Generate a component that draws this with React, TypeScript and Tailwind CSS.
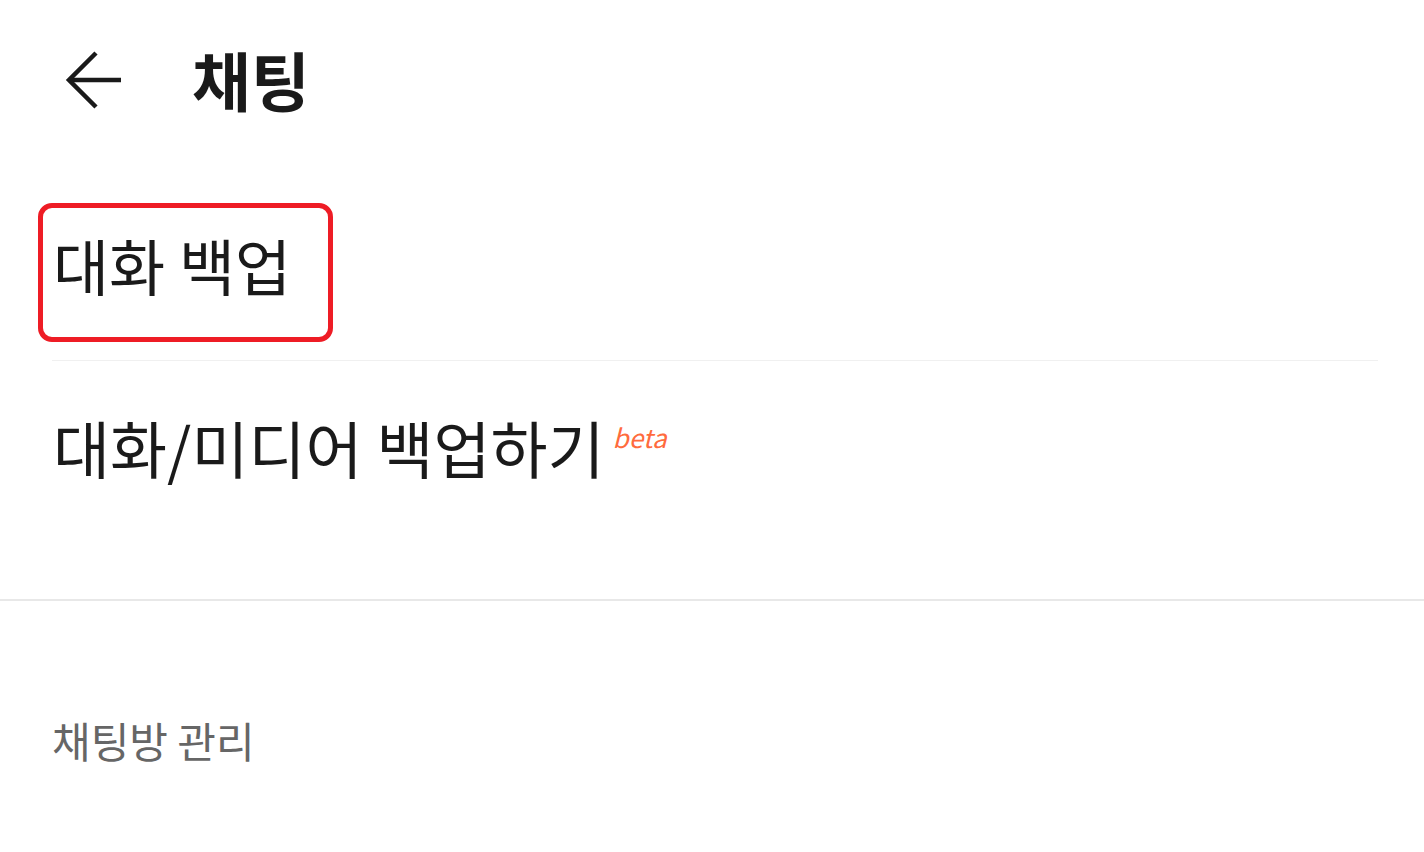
import React from "react";

export default function App() {
  const font = { fontFamily: '"Noto Sans CJK KR", "Noto Sans", sans-serif' };
  return (
    <div className="w-[1424px] h-[852px] bg-white overflow-hidden relative" style={font}>
      <div className="flex items-center h-[160px] pl-[62px]">
        <svg width="64" height="64" viewBox="0 0 64 64" fill="none" stroke="#1a1a1a" strokeWidth="4.5" strokeLinecap="butt">
          <path d="M59 32 H8" />
          <path d="M34 5 L7 32 L34 59" />
        </svg>
        <div className="ml-[66px] text-[64px] font-bold text-[#1a1a1a] leading-none -mt-[4px]">채팅</div>
      </div>
      <div className="pl-[52px] pr-[46px]">
        <div className="h-[201px] flex items-center border-b border-[#f0f0f0] relative">
          <div className="text-[61px] text-[#1a1a1a] leading-none mt-[8px] ml-[1px]">대화 백업</div>
          <div className="absolute left-[-14px] top-[43px] w-[295px] h-[139px] border-[5px] border-[#ee1c25] rounded-[14px]" />
        </div>
        <div className="h-[160px] flex items-start pt-[55px]">
          <div className="text-[62px] text-[#1a1a1a] leading-none ml-[1px]">대화/미디어 백업하기</div>
          <div className="text-[26px] italic text-[#ff6b3d] leading-none ml-[8px] mt-[8px]">beta</div>
        </div>
      </div>
      <div className="h-[2px] bg-[#e8e8e8] mt-[78px]" />
      <div className="pl-[52px] pt-[118px] text-[42px] text-[#666666] leading-none">채팅방 관리</div>
    </div>
  );
}
